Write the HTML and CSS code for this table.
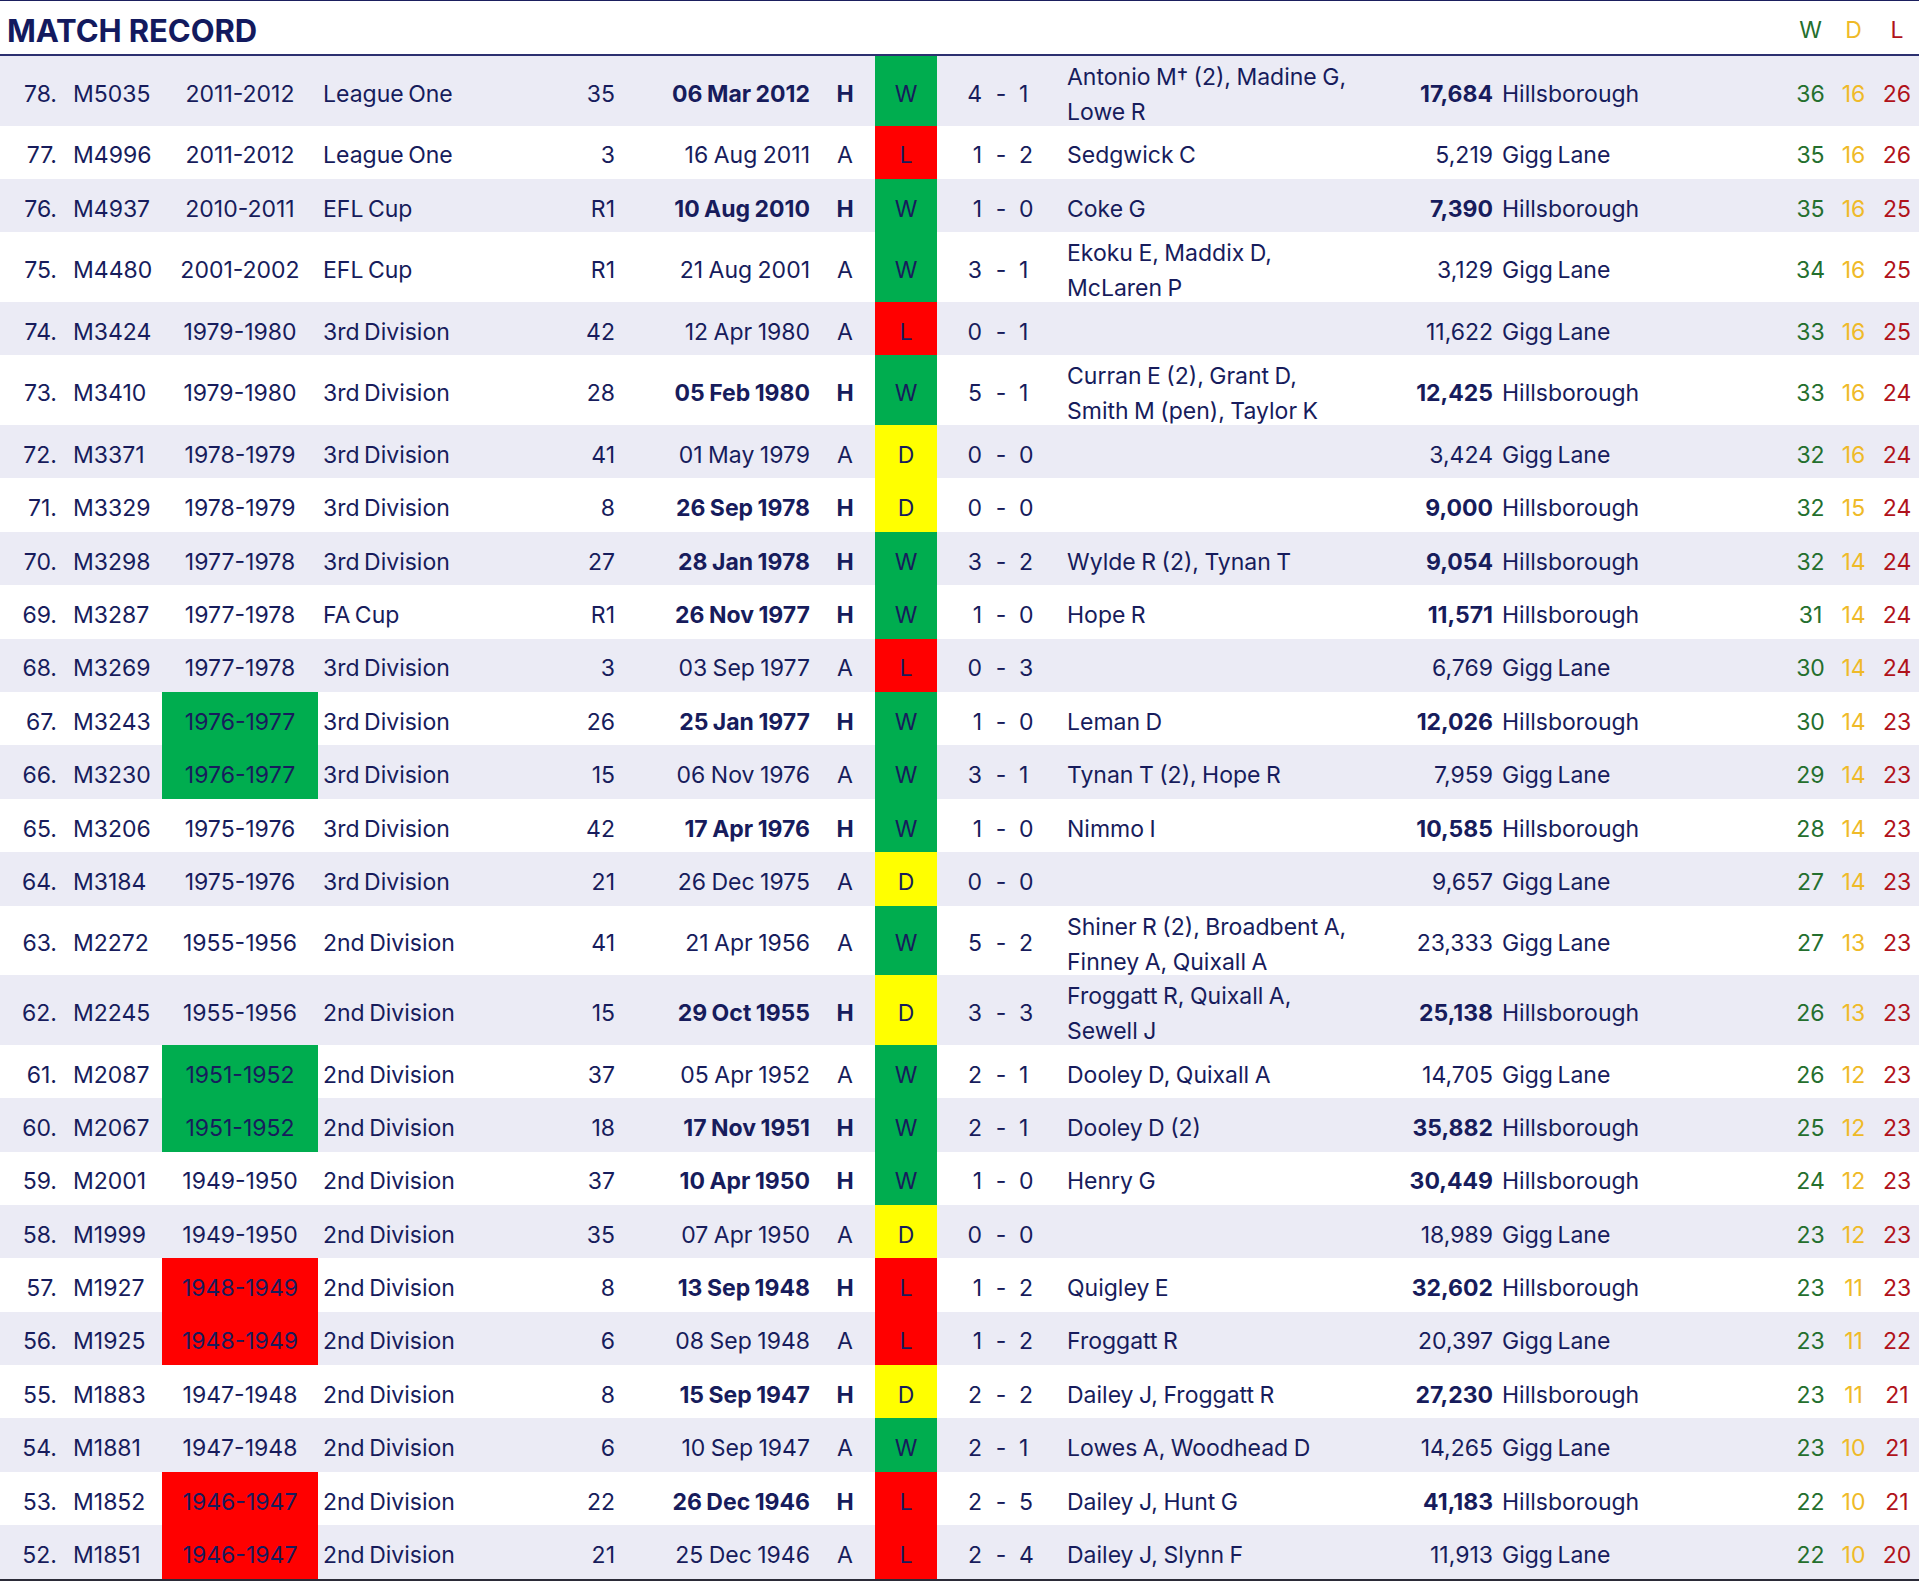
FILE: index.html
```html
<!DOCTYPE html>
<html lang="en">
<head>
<meta charset="utf-8">
<title>Match Record</title>
<link rel="stylesheet" href="styles.css">
</head>
<body>
<div class="record">
  <div class="head">
    <div class="title">MATCH RECORD</div>
    <div class="tw">W</div><div class="td">D</div><div class="tl">L</div>
  </div>
  <div class="rows">
    <div class="row"><span class="num">78.</span><span class="mid">M5035</span><span class="season">2011-2012</span><span class="comp">League One</span><span class="rnd">35</span><span class="date b">06 Mar 2012</span><span class="ha b">H</span><span class="res w">W</span><span class="gh">4</span><span class="gd">-</span><span class="ga">1</span><span class="scorers two">Antonio M† (2), Madine G,<br>Lowe R</span><span class="att b">17,684</span><span class="venue">Hillsborough</span><span class="cw">36</span><span class="cd">16</span><span class="cl">26</span></div>
    <div class="row"><span class="num">77.</span><span class="mid">M4996</span><span class="season">2011-2012</span><span class="comp">League One</span><span class="rnd">3</span><span class="date">16 Aug 2011</span><span class="ha">A</span><span class="res l">L</span><span class="gh">1</span><span class="gd">-</span><span class="ga">2</span><span class="scorers">Sedgwick C</span><span class="att">5,219</span><span class="venue">Gigg Lane</span><span class="cw">35</span><span class="cd">16</span><span class="cl">26</span></div>
    <div class="row"><span class="num">76.</span><span class="mid">M4937</span><span class="season">2010-2011</span><span class="comp">EFL Cup</span><span class="rnd">R1</span><span class="date b">10 Aug 2010</span><span class="ha b">H</span><span class="res w">W</span><span class="gh">1</span><span class="gd">-</span><span class="ga">0</span><span class="scorers">Coke G</span><span class="att b">7,390</span><span class="venue">Hillsborough</span><span class="cw">35</span><span class="cd">16</span><span class="cl">25</span></div>
    <div class="row"><span class="num">75.</span><span class="mid">M4480</span><span class="season">2001-2002</span><span class="comp">EFL Cup</span><span class="rnd">R1</span><span class="date">21 Aug 2001</span><span class="ha">A</span><span class="res w">W</span><span class="gh">3</span><span class="gd">-</span><span class="ga">1</span><span class="scorers two">Ekoku E, Maddix D,<br>McLaren P</span><span class="att">3,129</span><span class="venue">Gigg Lane</span><span class="cw">34</span><span class="cd">16</span><span class="cl">25</span></div>
    <div class="row"><span class="num">74.</span><span class="mid">M3424</span><span class="season">1979-1980</span><span class="comp">3rd Division</span><span class="rnd">42</span><span class="date">12 Apr 1980</span><span class="ha">A</span><span class="res l">L</span><span class="gh">0</span><span class="gd">-</span><span class="ga">1</span><span class="scorers"></span><span class="att">11,622</span><span class="venue">Gigg Lane</span><span class="cw">33</span><span class="cd">16</span><span class="cl">25</span></div>
    <div class="row"><span class="num">73.</span><span class="mid">M3410</span><span class="season">1979-1980</span><span class="comp">3rd Division</span><span class="rnd">28</span><span class="date b">05 Feb 1980</span><span class="ha b">H</span><span class="res w">W</span><span class="gh">5</span><span class="gd">-</span><span class="ga">1</span><span class="scorers two">Curran E (2), Grant D,<br>Smith M (pen), Taylor K</span><span class="att b">12,425</span><span class="venue">Hillsborough</span><span class="cw">33</span><span class="cd">16</span><span class="cl">24</span></div>
    <div class="row"><span class="num">72.</span><span class="mid">M3371</span><span class="season">1978-1979</span><span class="comp">3rd Division</span><span class="rnd">41</span><span class="date">01 May 1979</span><span class="ha">A</span><span class="res d">D</span><span class="gh">0</span><span class="gd">-</span><span class="ga">0</span><span class="scorers"></span><span class="att">3,424</span><span class="venue">Gigg Lane</span><span class="cw">32</span><span class="cd">16</span><span class="cl">24</span></div>
    <div class="row"><span class="num">71.</span><span class="mid">M3329</span><span class="season">1978-1979</span><span class="comp">3rd Division</span><span class="rnd">8</span><span class="date b">26 Sep 1978</span><span class="ha b">H</span><span class="res d">D</span><span class="gh">0</span><span class="gd">-</span><span class="ga">0</span><span class="scorers"></span><span class="att b">9,000</span><span class="venue">Hillsborough</span><span class="cw">32</span><span class="cd">15</span><span class="cl">24</span></div>
    <div class="row"><span class="num">70.</span><span class="mid">M3298</span><span class="season">1977-1978</span><span class="comp">3rd Division</span><span class="rnd">27</span><span class="date b">28 Jan 1978</span><span class="ha b">H</span><span class="res w">W</span><span class="gh">3</span><span class="gd">-</span><span class="ga">2</span><span class="scorers">Wylde R (2), Tynan T</span><span class="att b">9,054</span><span class="venue">Hillsborough</span><span class="cw">32</span><span class="cd">14</span><span class="cl">24</span></div>
    <div class="row"><span class="num">69.</span><span class="mid">M3287</span><span class="season">1977-1978</span><span class="comp">FA Cup</span><span class="rnd">R1</span><span class="date b">26 Nov 1977</span><span class="ha b">H</span><span class="res w">W</span><span class="gh">1</span><span class="gd">-</span><span class="ga">0</span><span class="scorers">Hope R</span><span class="att b">11,571</span><span class="venue">Hillsborough</span><span class="cw">31</span><span class="cd">14</span><span class="cl">24</span></div>
    <div class="row"><span class="num">68.</span><span class="mid">M3269</span><span class="season">1977-1978</span><span class="comp">3rd Division</span><span class="rnd">3</span><span class="date">03 Sep 1977</span><span class="ha">A</span><span class="res l">L</span><span class="gh">0</span><span class="gd">-</span><span class="ga">3</span><span class="scorers"></span><span class="att">6,769</span><span class="venue">Gigg Lane</span><span class="cw">30</span><span class="cd">14</span><span class="cl">24</span></div>
    <div class="row"><span class="num">67.</span><span class="mid">M3243</span><span class="season sg">1976-1977</span><span class="comp">3rd Division</span><span class="rnd">26</span><span class="date b">25 Jan 1977</span><span class="ha b">H</span><span class="res w">W</span><span class="gh">1</span><span class="gd">-</span><span class="ga">0</span><span class="scorers">Leman D</span><span class="att b">12,026</span><span class="venue">Hillsborough</span><span class="cw">30</span><span class="cd">14</span><span class="cl">23</span></div>
    <div class="row"><span class="num">66.</span><span class="mid">M3230</span><span class="season sg">1976-1977</span><span class="comp">3rd Division</span><span class="rnd">15</span><span class="date">06 Nov 1976</span><span class="ha">A</span><span class="res w">W</span><span class="gh">3</span><span class="gd">-</span><span class="ga">1</span><span class="scorers">Tynan T (2), Hope R</span><span class="att">7,959</span><span class="venue">Gigg Lane</span><span class="cw">29</span><span class="cd">14</span><span class="cl">23</span></div>
    <div class="row"><span class="num">65.</span><span class="mid">M3206</span><span class="season">1975-1976</span><span class="comp">3rd Division</span><span class="rnd">42</span><span class="date b">17 Apr 1976</span><span class="ha b">H</span><span class="res w">W</span><span class="gh">1</span><span class="gd">-</span><span class="ga">0</span><span class="scorers">Nimmo I</span><span class="att b">10,585</span><span class="venue">Hillsborough</span><span class="cw">28</span><span class="cd">14</span><span class="cl">23</span></div>
    <div class="row"><span class="num">64.</span><span class="mid">M3184</span><span class="season">1975-1976</span><span class="comp">3rd Division</span><span class="rnd">21</span><span class="date">26 Dec 1975</span><span class="ha">A</span><span class="res d">D</span><span class="gh">0</span><span class="gd">-</span><span class="ga">0</span><span class="scorers"></span><span class="att">9,657</span><span class="venue">Gigg Lane</span><span class="cw">27</span><span class="cd">14</span><span class="cl">23</span></div>
    <div class="row"><span class="num">63.</span><span class="mid">M2272</span><span class="season">1955-1956</span><span class="comp">2nd Division</span><span class="rnd">41</span><span class="date">21 Apr 1956</span><span class="ha">A</span><span class="res w">W</span><span class="gh">5</span><span class="gd">-</span><span class="ga">2</span><span class="scorers two">Shiner R (2), Broadbent A,<br>Finney A, Quixall A</span><span class="att">23,333</span><span class="venue">Gigg Lane</span><span class="cw">27</span><span class="cd">13</span><span class="cl">23</span></div>
    <div class="row"><span class="num">62.</span><span class="mid">M2245</span><span class="season">1955-1956</span><span class="comp">2nd Division</span><span class="rnd">15</span><span class="date b">29 Oct 1955</span><span class="ha b">H</span><span class="res d">D</span><span class="gh">3</span><span class="gd">-</span><span class="ga">3</span><span class="scorers two">Froggatt R, Quixall A,<br>Sewell J</span><span class="att b">25,138</span><span class="venue">Hillsborough</span><span class="cw">26</span><span class="cd">13</span><span class="cl">23</span></div>
    <div class="row"><span class="num">61.</span><span class="mid">M2087</span><span class="season sg">1951-1952</span><span class="comp">2nd Division</span><span class="rnd">37</span><span class="date">05 Apr 1952</span><span class="ha">A</span><span class="res w">W</span><span class="gh">2</span><span class="gd">-</span><span class="ga">1</span><span class="scorers">Dooley D, Quixall A</span><span class="att">14,705</span><span class="venue">Gigg Lane</span><span class="cw">26</span><span class="cd">12</span><span class="cl">23</span></div>
    <div class="row"><span class="num">60.</span><span class="mid">M2067</span><span class="season sg">1951-1952</span><span class="comp">2nd Division</span><span class="rnd">18</span><span class="date b">17 Nov 1951</span><span class="ha b">H</span><span class="res w">W</span><span class="gh">2</span><span class="gd">-</span><span class="ga">1</span><span class="scorers">Dooley D (2)</span><span class="att b">35,882</span><span class="venue">Hillsborough</span><span class="cw">25</span><span class="cd">12</span><span class="cl">23</span></div>
    <div class="row"><span class="num">59.</span><span class="mid">M2001</span><span class="season">1949-1950</span><span class="comp">2nd Division</span><span class="rnd">37</span><span class="date b">10 Apr 1950</span><span class="ha b">H</span><span class="res w">W</span><span class="gh">1</span><span class="gd">-</span><span class="ga">0</span><span class="scorers">Henry G</span><span class="att b">30,449</span><span class="venue">Hillsborough</span><span class="cw">24</span><span class="cd">12</span><span class="cl">23</span></div>
    <div class="row"><span class="num">58.</span><span class="mid">M1999</span><span class="season">1949-1950</span><span class="comp">2nd Division</span><span class="rnd">35</span><span class="date">07 Apr 1950</span><span class="ha">A</span><span class="res d">D</span><span class="gh">0</span><span class="gd">-</span><span class="ga">0</span><span class="scorers"></span><span class="att">18,989</span><span class="venue">Gigg Lane</span><span class="cw">23</span><span class="cd">12</span><span class="cl">23</span></div>
    <div class="row"><span class="num">57.</span><span class="mid">M1927</span><span class="season sr">1948-1949</span><span class="comp">2nd Division</span><span class="rnd">8</span><span class="date b">13 Sep 1948</span><span class="ha b">H</span><span class="res l">L</span><span class="gh">1</span><span class="gd">-</span><span class="ga">2</span><span class="scorers">Quigley E</span><span class="att b">32,602</span><span class="venue">Hillsborough</span><span class="cw">23</span><span class="cd">11</span><span class="cl">23</span></div>
    <div class="row"><span class="num">56.</span><span class="mid">M1925</span><span class="season sr">1948-1949</span><span class="comp">2nd Division</span><span class="rnd">6</span><span class="date">08 Sep 1948</span><span class="ha">A</span><span class="res l">L</span><span class="gh">1</span><span class="gd">-</span><span class="ga">2</span><span class="scorers">Froggatt R</span><span class="att">20,397</span><span class="venue">Gigg Lane</span><span class="cw">23</span><span class="cd">11</span><span class="cl">22</span></div>
    <div class="row"><span class="num">55.</span><span class="mid">M1883</span><span class="season">1947-1948</span><span class="comp">2nd Division</span><span class="rnd">8</span><span class="date b">15 Sep 1947</span><span class="ha b">H</span><span class="res d">D</span><span class="gh">2</span><span class="gd">-</span><span class="ga">2</span><span class="scorers">Dailey J, Froggatt R</span><span class="att b">27,230</span><span class="venue">Hillsborough</span><span class="cw">23</span><span class="cd">11</span><span class="cl">21</span></div>
    <div class="row"><span class="num">54.</span><span class="mid">M1881</span><span class="season">1947-1948</span><span class="comp">2nd Division</span><span class="rnd">6</span><span class="date">10 Sep 1947</span><span class="ha">A</span><span class="res w">W</span><span class="gh">2</span><span class="gd">-</span><span class="ga">1</span><span class="scorers">Lowes A, Woodhead D</span><span class="att">14,265</span><span class="venue">Gigg Lane</span><span class="cw">23</span><span class="cd">10</span><span class="cl">21</span></div>
    <div class="row"><span class="num">53.</span><span class="mid">M1852</span><span class="season sr">1946-1947</span><span class="comp">2nd Division</span><span class="rnd">22</span><span class="date b">26 Dec 1946</span><span class="ha b">H</span><span class="res l">L</span><span class="gh">2</span><span class="gd">-</span><span class="ga">5</span><span class="scorers">Dailey J, Hunt G</span><span class="att b">41,183</span><span class="venue">Hillsborough</span><span class="cw">22</span><span class="cd">10</span><span class="cl">21</span></div>
    <div class="row"><span class="num">52.</span><span class="mid">M1851</span><span class="season sr">1946-1947</span><span class="comp">2nd Division</span><span class="rnd">21</span><span class="date">25 Dec 1946</span><span class="ha">A</span><span class="res l">L</span><span class="gh">2</span><span class="gd">-</span><span class="ga">4</span><span class="scorers">Dailey J, Slynn F</span><span class="att">11,913</span><span class="venue">Gigg Lane</span><span class="cw">22</span><span class="cd">10</span><span class="cl">20</span></div>
  </div>
</div>
</body>
</html>
```

FILE: styles.css
```css
html, body {
  margin: 0;
  padding: 0;
  background: #ffffff;
}

body {
  font-family: Inter, "Liberation Sans", sans-serif;
  font-size: 23px;
  color: #171c5c;
}

.record {
  width: 1919px;
}

.head,
.row {
  display: grid;
  grid-template-columns: 62px 100px 156px 242px 62px 196px 57px 62px 46px 36px 41px 300px 134px 295px 43px 43px 44px;
}

.head {
  height: 53px;
  border-top: 1px solid #1b1f5e;
  border-bottom: 2px solid #2c3070;
  align-items: center;
}

.title {
  grid-column: 1 / 15;
  padding-left: 7px;
  padding-top: 6px;
  font-size: 31px;
  font-weight: 700;
  letter-spacing: -0.1px;
  color: #131a5e;
  line-height: 1;
}

.tw, .td, .tl {
  text-align: center;
  padding-top: 4px;
}

.tw, .cw { color: #246f2e; }
.td, .cd { color: #efba28; }
.tl, .cl { color: #b0121a; }

.rows {
  border-bottom: 2px solid #2b2b38;
}

.row {
  min-height: 53.4px;
  line-height: 34.8px;
  background: #ffffff;
}

.row:nth-child(odd) {
  background: #ebebf5;
}

.row > span {
  display: flex;
  align-items: center;
  white-space: nowrap;
  padding-top: 7px;
}

.row > span.two {
  line-height: 35px;
  padding-top: 4px;
  margin-bottom: -4.4px;
}

.num {
  justify-content: flex-end;
  padding-right: 5px;
}

.mid {
  padding-left: 11px;
}

.season {
  justify-content: center;
}

.sg { background: #00ad4f; }
.sr { background: #ff0000; }

.comp {
  padding-left: 5px;
  word-spacing: -2px;
}

.rnd {
  justify-content: flex-end;
  padding-right: 7px;
}

.date {
  justify-content: flex-end;
  padding-right: 8px;
  word-spacing: -1px;
}

.ha {
  justify-content: center;
  padding-right: 3px;
}

.b { font-weight: 700; }

.res {
  justify-content: center;
}

.res.w { background: #00ad4f; }
.res.l { background: #ff0000; }
.res.d { background: #ffff00; }

.gh {
  justify-content: flex-end;
  padding-right: 1px;
}

.gd {
  justify-content: center;
}

.ga {
  justify-content: flex-start;
}

.scorers {
  padding-left: 7px;
  word-spacing: -1px;
}

.att {
  justify-content: flex-end;
  padding-right: 1px;
}

.venue {
  padding-left: 8px;
  word-spacing: -2px;
}

.cw, .cd, .cl {
  justify-content: center;
}
```
